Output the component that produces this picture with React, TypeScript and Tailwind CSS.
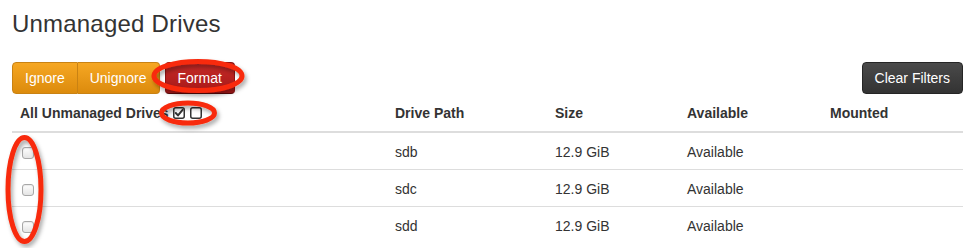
import React from "react";

const rows = [
  { path: "sdb", size: "12.9 GiB", avail: "Available" },
  { path: "sdc", size: "12.9 GiB", avail: "Available" },
  { path: "sdd", size: "12.9 GiB", avail: "Available" },
];

function RowCheckbox() {
  return (
    <span className="inline-block w-[12px] h-[12px] rounded-[3px] border border-[#a8a8a8] bg-gradient-to-b from-white to-[#e4e4e4] shadow-[inset_0_1px_1px_rgba(0,0,0,0.08)] ml-[2px] mt-[2px]" />
  );
}

function CheckedIcon() {
  return (
    <svg width="12" height="12" viewBox="0 0 12 12" className="inline-block">
      <rect x="0.75" y="0.75" width="10.5" height="10.5" rx="2" fill="none" stroke="#333" strokeWidth="1.5" />
      <path d="M2.8 6 L5 8.4 L9.6 2.8" fill="none" stroke="#333" strokeWidth="2" strokeLinecap="round" strokeLinejoin="round" />
    </svg>
  );
}

function EmptyIcon() {
  return (
    <svg width="12" height="12" viewBox="0 0 12 12" className="inline-block">
      <rect x="0.75" y="0.75" width="10.5" height="10.5" rx="2" fill="none" stroke="#333" strokeWidth="1.5" />
    </svg>
  );
}

export default function App() {
  return (
    <div className="relative w-[975px] h-[248px] overflow-hidden bg-white text-[#333] font-['Liberation_Sans',Arial,sans-serif] text-[14px] leading-5">
      <div className="px-3">
        <h2 className="mt-[9px] text-[24px] leading-[30px] font-normal text-[#333] tracking-[0.2px]">Unmanaged Drives</h2>

        <div className="mt-[23px] flex items-start justify-between">
          <div className="flex gap-[5px]">
            <div className="flex">
              <button className="h-[32px] px-3 border border-[#c98213] rounded-l-[4px] bg-gradient-to-b from-[#f6a722] to-[#dc8b0c] text-white text-[14px]">
                Ignore
              </button>
              <button className="h-[32px] px-3 border border-l-0 border-[#c98213] rounded-r-[4px] bg-gradient-to-b from-[#f6a722] to-[#dc8b0c] text-white text-[14px]">
                Unignore
              </button>
            </div>
            <button className="h-[32px] px-3 border border-[#8f1212] border-b-[#5c0808] rounded-[4px] bg-gradient-to-b from-[#c52a27] to-[#a81818] text-white text-[14px]">
              Format
            </button>
          </div>
          <button className="h-[32px] px-3 border border-[#252525] rounded-[4px] bg-gradient-to-b from-[#4a4a4a] to-[#333] text-white text-[14px]">
            Clear Filters
          </button>
        </div>

        <table className="mt-[1px] w-[951px] table-fixed border-collapse">
          <colgroup>
            <col className="w-[375px]" />
            <col className="w-[160px]" />
            <col className="w-[132px]" />
            <col className="w-[143px]" />
            <col className="w-[141px]" />
          </colgroup>
          <thead>
            <tr className="border-b-2 border-[#ddd]">
              <th className="px-2 py-2 text-left font-bold">
                <span className="inline-flex items-center">
                  All Unmanaged Drives
                  <span className="ml-[4px] inline-flex items-center gap-[5px]">
                    <CheckedIcon />
                    <EmptyIcon />
                  </span>
                </span>
              </th>
              <th className="px-2 py-2 text-left font-bold">Drive Path</th>
              <th className="px-2 py-2 text-left font-bold">Size</th>
              <th className="px-2 py-2 text-left font-bold">Available</th>
              <th className="px-2 py-2 text-left font-bold">Mounted</th>
            </tr>
          </thead>
          <tbody>
            {rows.map((r, i) => (
              <tr key={r.path} className={i === 0 ? "" : "border-t border-[#ddd]"}>
                <td className="px-2 pt-[9px] pb-[7px]">
                  <div className="h-5 flex items-center">
                    <RowCheckbox />
                  </div>
                </td>
                <td className="px-2 pt-[9px] pb-[7px]">{r.path}</td>
                <td className="px-2 pt-[9px] pb-[7px]">{r.size}</td>
                <td className="px-2 pt-[9px] pb-[7px]">{r.avail}</td>
                <td className="px-2 pt-[9px] pb-[7px]"></td>
              </tr>
            ))}
          </tbody>
        </table>
      </div>

      <svg className="pointer-events-none absolute left-0 top-0" width="975" height="248" viewBox="0 0 975 248">
        <defs>
          <filter id="sh" x="-20%" y="-20%" width="140%" height="140%">
            <feDropShadow dx="2" dy="3" stdDeviation="2" floodColor="#000" floodOpacity="0.35" />
          </filter>
        </defs>
        <g fill="none" stroke="#f82a0a" strokeWidth="5" filter="url(#sh)">
          <ellipse cx="198" cy="76" rx="44" ry="14.5" />
          <ellipse cx="188" cy="113" rx="26.5" ry="10" />
          <ellipse cx="24.5" cy="189.5" rx="16.5" ry="52" />
        </g>
      </svg>
    </div>
  );
}
